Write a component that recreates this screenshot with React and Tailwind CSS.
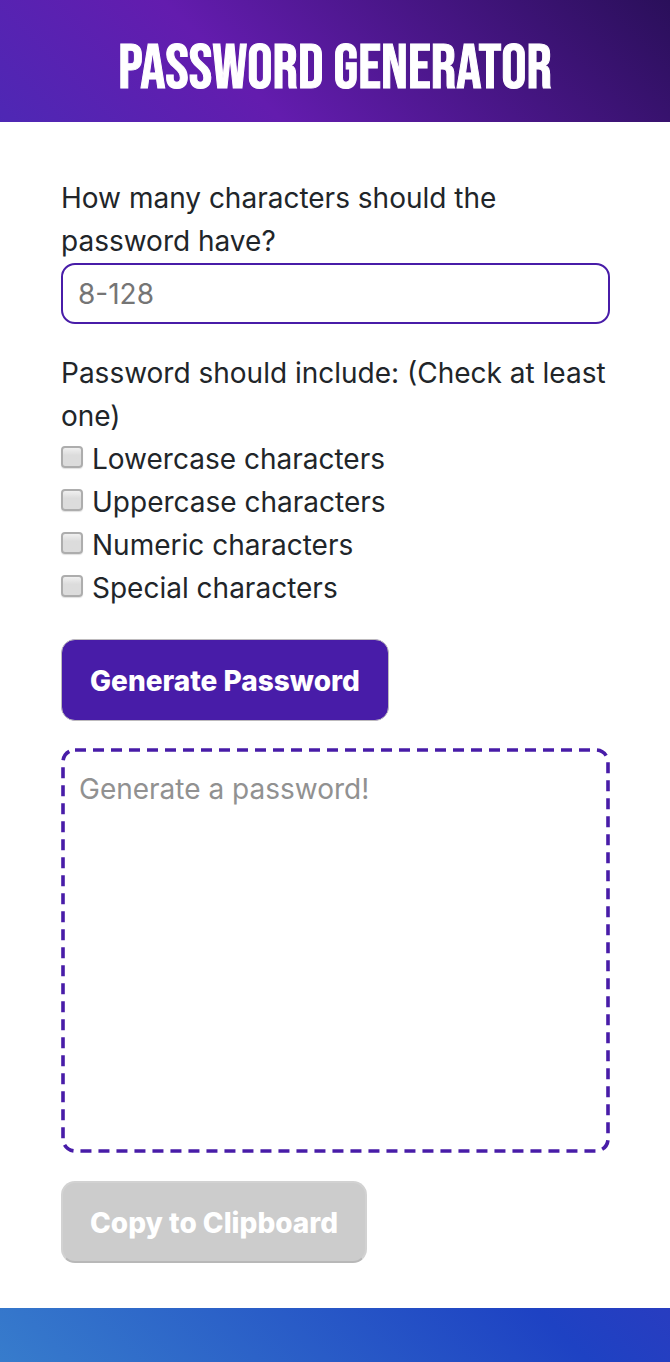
import { useState } from "react";

const options = ["Lowercase", "Uppercase", "Numeric", "Special"];

export default function App() {
  const [length, setLength] = useState("");

  return (
    <div className="min-h-screen bg-[linear-gradient(45deg,#377ccc_0%,#1e42c3_29%,#631cae_75%,#2a0f5a_100%)] pb-[54px] font-['Inter','Liberation_Sans',sans-serif] text-[28px] leading-[43px] text-[#212529]">
      <header className="flex h-[122px] items-center justify-center pt-4">
        <h1 className="text-center font-['Bebas_Neue','Liberation_Sans_Narrow','Liberation_Sans',sans-serif] text-[63px] leading-none font-normal text-white uppercase [-webkit-text-stroke:1px_white]">
          Password Generator
        </h1>
      </header>
      <main className="bg-white pt-[55px] pr-[60px] pb-[45px] pl-[61px]">
        <form onSubmit={(e) => e.preventDefault()}>
          <label htmlFor="length" className="block">
            How many characters should the password have?
          </label>
          <input
            id="length"
            type="text"
            placeholder="8-128"
            value={length}
            onChange={(e) => setLength(e.target.value)}
            className="block h-[61px] w-full rounded-[14px] border-2 border-[#481ca8] bg-white px-[15px] placeholder:text-[#757575]"
          />
          <fieldset className="mt-7">
            <legend>Password should include: (Check at least one)</legend>
            {options.map((name) => (
              <div key={name} className="flex items-center gap-[9px]">
                <input
                  id={name}
                  type="checkbox"
                  className="-mt-1.5 size-[22px] shrink-0 appearance-none rounded-[4px] border-2 border-[#adadad] bg-linear-to-b from-[#f0f0f0] to-[#dcdcdc] to-40% shadow-[0_1px_1px_#e0e0e0] checked:bg-[#481ca8] checked:bg-none"
                />
                <label htmlFor={name}>{name} characters</label>
              </div>
            ))}
          </fieldset>
          <button
            type="submit"
            className="mt-[29px] block h-[82px] rounded-[14px] border border-[#bdbabd] bg-[#481ca8] px-7 pt-0.5 font-extrabold text-white"
          >
            Generate Password
          </button>
          <div className="relative mt-[27px]">
            <textarea
              aria-label="Generated password"
              placeholder="Generate a password!"
              readOnly
              className="block h-[405px] w-full resize-none rounded-[14px] bg-white px-[18px] py-5 placeholder:text-[#919191]"
            />
            {/* Dashed outline with long dashes and wide gaps */}
            <svg
              aria-hidden="true"
              className="pointer-events-none absolute inset-0 size-full"
            >
              <rect
                x="2"
                y="2"
                rx="12"
                className="h-[calc(100%-4px)] w-[calc(100%-4px)] fill-none stroke-[#481ca8]"
                strokeWidth="3.6"
                strokeDasharray="11 7"
              />
            </svg>
          </div>
          <button
            type="button"
            disabled
            className="mt-7 block h-[82px] rounded-[14px] border-2 border-[#d2d2d2] border-b-[#b8b8b8] bg-[#cccccc] px-[27px] pt-0.5 font-extrabold text-white"
          >
            Copy to Clipboard
          </button>
        </form>
      </main>
    </div>
  );
}
